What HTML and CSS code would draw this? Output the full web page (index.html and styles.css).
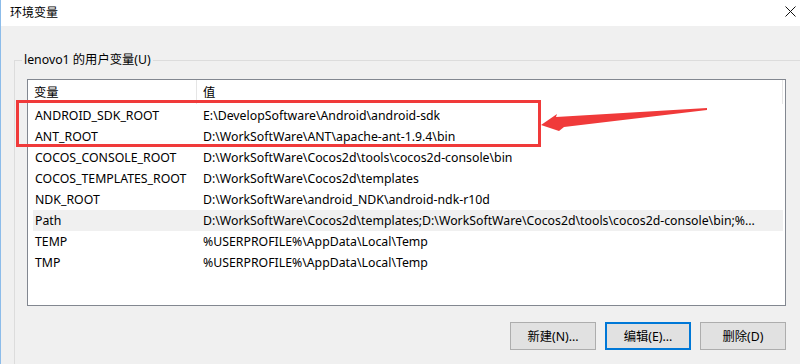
FILE: index.html
```html
<!DOCTYPE html>
<html>
<head>
<meta charset="utf-8">
<link rel="stylesheet" href="styles.css">
</head>
<body>
<div class="window">
  <div class="titlebar">
    <span class="title">环境变量</span>
    <svg class="close" width="11" height="11" viewBox="0 0 11 11"><path d="M0.5 0.5 L10.5 10.5 M10.5 0.5 L0.5 10.5" stroke="#111" stroke-width="1"/></svg>
  </div>
  <div class="content">
    <fieldset class="group">
      <legend class="legend">lenovo1 的用户变量(U)</legend>
      <div class="list">
        <div class="header">
          <div class="hcell hname">变量</div>
          <div class="hcell hval">值</div>
          <div class="hend"></div>
        </div>
        <div class="rows">
          <div class="row"><span class="cname">ANDROID_SDK_ROOT</span><span class="cval">E:\DevelopSoftware\Android\android-sdk</span></div>
          <div class="row"><span class="cname">ANT_ROOT</span><span class="cval">D:\WorkSoftWare\ANT\apache-ant-1.9.4\bin</span></div>
          <div class="row"><span class="cname">COCOS_CONSOLE_ROOT</span><span class="cval">D:\WorkSoftWare\Cocos2d\tools\cocos2d-console\bin</span></div>
          <div class="row"><span class="cname">COCOS_TEMPLATES_ROOT</span><span class="cval">D:\WorkSoftWare\Cocos2d\templates</span></div>
          <div class="row"><span class="cname">NDK_ROOT</span><span class="cval">D:\WorkSoftWare\android_NDK\android-ndk-r10d</span></div>
          <div class="row selected"><span class="cname">Path</span><span class="cval">D:\WorkSoftWare\Cocos2d\templates;D:\WorkSoftWare\Cocos2d\tools\cocos2d-console\bin;%...</span></div>
          <div class="row"><span class="cname">TEMP</span><span class="cval">%USERPROFILE%\AppData\Local\Temp</span></div>
          <div class="row"><span class="cname">TMP</span><span class="cval">%USERPROFILE%\AppData\Local\Temp</span></div>
        </div>
      </div>
      <div class="buttons">
        <button class="btn">新建(N)...</button>
        <button class="btn focused">编辑(E)...</button>
        <button class="btn">删除(D)</button>
      </div>
    </fieldset>
  </div>
  <div class="redbox"></div>
  <svg class="arrow" width="180" height="40" viewBox="0 0 180 40">
    <polygon points="1,17 17,6 16,9 167,0 167,2 24,19 19,23" fill="#f03a3a"/>
  </svg>
</div>
</body>
</html>
```
FILE: styles.css
```css
html, body {
  margin: 0;
  padding: 0;
}
body {
  background: #f0f0f0;
  font-family: "Noto Sans", "Noto Sans CJK SC", sans-serif;
  font-size: 12.3px;
  color: #000;
}
.window {
  position: relative;
  width: 800px;
  height: 364px;
  overflow: hidden;
  box-sizing: border-box;
  border-left: 1px solid #8cbcea;
  background: #f0f0f0;
}
.titlebar {
  height: 26px;
  background: #fff;
  display: flex;
  align-items: center;
  justify-content: space-between;
  padding: 0 4px 0 9px;
}
.title {
  font-family: "Noto Sans CJK SC", sans-serif;
  font-size: 12px;
  line-height: 14px;
  margin-top: -2px;
}
.close {
  margin-top: -4px;
}
.content {
  padding: 27px 0 0 13px;
}
.group {
  margin: 0;
  width: 782px;
  height: 320px;
  box-sizing: content-box;
  border: 1px solid #dcdcdc;
  padding: 0 0 0 12px;
}
.legend {
  font-family: "Noto Sans", "Noto Sans CJK SC", sans-serif;
  font-size: 12.3px;
  line-height: 14px;
  padding: 0 2px;
  margin-left: -5px;
}
.list {
  margin-top: 12px;
  width: 759px;
  height: 227px;
  box-sizing: border-box;
  border: 1px solid #828790;
  background: #fff;
}
.header {
  height: 25px;
  display: flex;
  align-items: stretch;
}
.hcell {
  display: flex;
  align-items: center;
  padding-bottom: 1px;
  box-sizing: border-box;
}
.hname {
  width: 169px;
  padding-left: 6px;
  border-right: 1px solid #e5e5e5;
  margin-bottom: 1px;
}
.hval {
  flex: 1;
  padding-left: 6px;
}
.hend {
  width: 1px;
  background: #e5e5e5;
  margin: 0 2px 1px 0;
}
.rows {
  margin-left: 5px;
  width: 750px;
}
.row {
  height: 21px;
  display: flex;
  align-items: center;
  white-space: nowrap;
}
.row.selected {
  background: #f0f0f0;
}
.cname {
  width: 168px;
  padding-left: 2px;
  flex: none;
}
.cval {
  overflow: hidden;
}
.buttons {
  width: 759px;
  display: flex;
  justify-content: flex-end;
  gap: 9px;
  margin-top: 16px;
}
.btn {
  width: 86px;
  height: 28px;
  box-sizing: border-box;
  border: 1px solid #adadad;
  background: #e1e1e1;
  font-family: "Noto Sans", "Noto Sans CJK SC", sans-serif;
  font-size: 12.3px;
  color: #000;
  padding: 0;
}
.btn.focused {
  border: 2px solid #0078d7;
}
.redbox {
  position: absolute;
  left: 15px;
  top: 100px;
  width: 525px;
  height: 47px;
  box-sizing: border-box;
  border: 3px solid #f03a3a;
}
.arrow {
  position: absolute;
  left: 539px;
  top: 108px;
}
```
